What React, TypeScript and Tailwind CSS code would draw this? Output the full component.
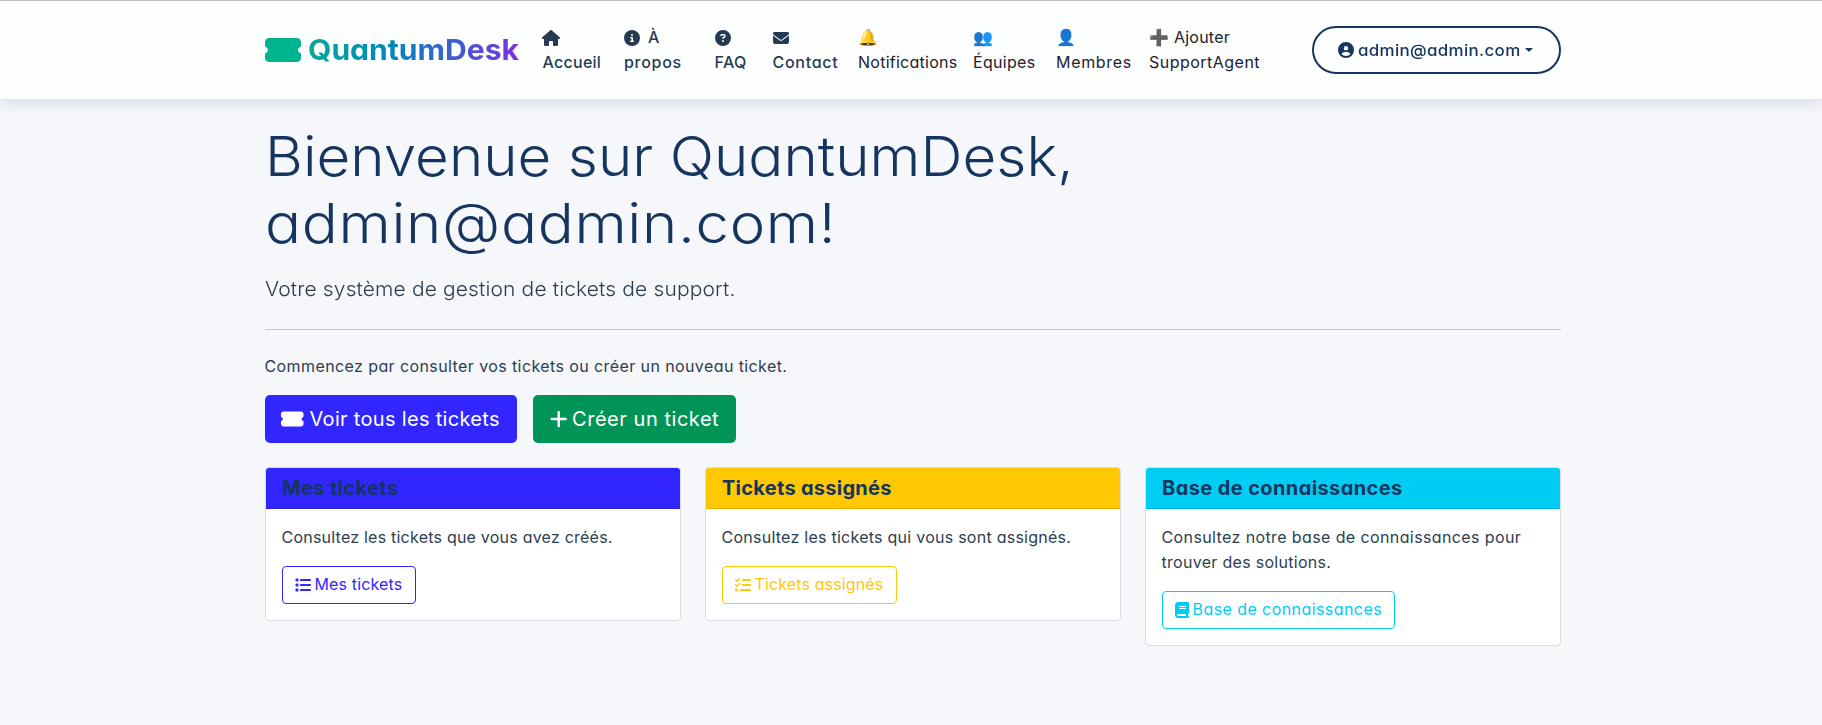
import type { ReactNode } from 'react'
import {
  FaBook,
  FaCircleInfo,
  FaCircleQuestion,
  FaCircleUser,
  FaEnvelope,
  FaHouse,
  FaList,
  FaListCheck,
  FaPlus,
  FaTicketSimple,
} from 'react-icons/fa6'

function NavItem({ width, icon, children }: { width: string; icon: ReactNode; children: ReactNode }) {
  return (
    <a href="#" className={`shrink-0 whitespace-nowrap leading-[25px] ${width}`}>
      <span className="flex h-[25px] items-center">{icon}</span>
      <span className="block">{children}</span>
    </a>
  )
}

function Emoji({ children }: { children: string }) {
  return <span className="font-['Noto_Color_Emoji'] text-base leading-none tracking-normal">{children}</span>
}

function Navbar() {
  return (
    <header className="h-[99px] border-t border-[#bfbfbf] bg-[#fdfefe] pl-[264.5px] shadow-[0_2px_16px_rgba(22,53,80,0.17)]">
      <div className="flex h-full w-[1296px] items-center">
        <a href="#" className="flex w-[277.5px] shrink-0 items-center">
          <FaTicketSimple className="h-8 w-9 text-[#00b48f]" />
          <span className="ml-[7.5px] origin-left scale-x-[1.045] bg-linear-[100deg,#06aa9a_0%,#0089b9_38%,#7f2fe6_100%] bg-clip-text text-[28.8px] leading-[46px] font-bold text-transparent">
            QuantumDesk
          </span>
        </a>
        <nav className="flex grow text-base">
          <div className="flex font-medium text-[#263b52]">
            <NavItem width="w-[82px]" icon={<FaHouse className="h-4 w-[18px]" />}>
              <span className="ml-[0.5px] tracking-[0.27px]">Accueil</span>
            </NavItem>
            <NavItem
              width="w-[90.5px]"
              icon={
                <>
                  <FaCircleInfo className="size-4" />
                  <span className="ml-[8px]">À</span>
                </>
              }
            >
              <span className="tracking-[0.7px]">propos</span>
            </NavItem>
            <NavItem width="w-[58px]" icon={<FaCircleQuestion className="size-4" />}>
              <span className="tracking-[0.44px]">FAQ</span>
            </NavItem>
            <NavItem width="w-[85.5px]" icon={<FaEnvelope className="size-4" />}>
              <span className="tracking-[0.73px]">Contact</span>
            </NavItem>
          </div>
          <div className="flex text-[#1c2230]">
            <NavItem width="w-[115px]" icon={<Emoji>🔔</Emoji>}>
              <span className="tracking-[0.26px]">Notifications</span>
            </NavItem>
            <NavItem width="w-[83px]" icon={<Emoji>👥</Emoji>}>
              <span className="tracking-[0.31px]">Équipes</span>
            </NavItem>
            <NavItem width="w-[93px]" icon={<Emoji>👤</Emoji>}>
              <span className="tracking-[0.68px]">Membres</span>
            </NavItem>
            <NavItem
              width="w-[120px]"
              icon={
                <>
                  <Emoji>➕</Emoji>
                  <span className="ml-[5px] tracking-[0.24px]">Ajouter</span>
                </>
              }
            >
              <span className="tracking-[0.48px]">SupportAgent</span>
            </NavItem>
          </div>
        </nav>
        <button className="flex h-12 w-[249px] shrink-0 items-center rounded-full border-2 border-[#15355f] pl-6 text-base font-medium text-[#15355f]">
          <FaCircleUser className="size-4" />
          <span className="ml-[4px] w-[167px] origin-left scale-x-[1.06] text-left tracking-[0.29px]">
            admin@admin.com
          </span>
          <span className="border-x-[4.8px] border-t-[4.8px] border-x-transparent border-t-[#15355f]" />
        </button>
      </div>
    </header>
  )
}

interface TopicCardProps {
  title: ReactNode
  header: string
  text: ReactNode
  button: string
  icon: ReactNode
  label: ReactNode
}

function TopicCard({ title, header, text, button, icon, label }: TopicCardProps) {
  return (
    <section className="w-[416px] overflow-hidden rounded-[4px] border border-[#dadde1] bg-white">
      <h5 className={`h-[41px] border-b px-4 text-xl leading-[40px] font-bold text-[#15355f] ${header}`}>{title}</h5>
      <div className="p-4 pl-[15.5px]">
        <p className="mb-4 leading-[25px] whitespace-nowrap">{text}</p>
        <a
          href="#"
          className={`flex h-[38px] items-center rounded-[4px] border pb-px pl-3 leading-[25px] whitespace-nowrap ${button}`}
        >
          {icon}
          {label}
        </a>
      </div>
    </section>
  )
}

export default function App() {
  return (
    <div className="min-h-[725px] bg-[#f5f7fb] font-['Inter',sans-serif] text-base text-[#2c3e50] [font-feature-settings:'cv11']">
      <Navbar />
      <main className="w-[1561px] pt-6 pl-[264.5px]">
        <h1 className="text-[55px] leading-[67px] font-light whitespace-nowrap text-[#15355f]">
          <span className="block origin-left scale-x-[1.06] tracking-[0.03px]">Bienvenue sur QuantumDesk,</span>
          <span className="block origin-left scale-x-[1.09] tracking-[0.6px]">admin@admin.com!</span>
        </h1>
        <p className="mt-[17px] origin-left scale-x-[1.05] text-xl leading-[31px] font-light tracking-[0.125px]">
          Votre système de gestion de tickets de support.
        </p>
        <hr className="mt-6 border-[#c3c6cb]" />
        <p className="mt-6 leading-[25px] tracking-[0.405px]">
          Commencez par consulter vos tickets ou créer un nouveau ticket.
        </p>
        <div className="mt-4 flex gap-4 text-xl whitespace-nowrap text-white">
          <a href="#" className="flex h-12 w-[252.5px] items-center rounded-[5px] bg-[#3126ff] pl-[16.5px]">
            <FaTicketSimple className="h-5 w-[22.5px]" />
            <span className="ml-[6px] tracking-[0.315px]">Voir tous les tickets</span>
          </a>
          <a href="#" className="flex h-12 w-[203px] items-center rounded-[5px] bg-[#009557] pl-[17px]">
            <FaPlus className="h-5 w-[17.5px]" />
            <span className="ml-[4.5px] tracking-[0.54px]">Créer un ticket</span>
          </a>
        </div>
        <div className="mt-6 flex items-start gap-6 pl-[0.5px]">
          <TopicCard
            title={<span className="tracking-[0.35px]">Mes tickets</span>}
            header="border-[#2b21e6] bg-[#3126ff]"
            text={<span className="tracking-[0.225px]">Consultez les tickets que vous avez créés.</span>}
            button="w-[134px] border-[#3126ff] text-[#3126ff]"
            icon={<FaList className="size-4" />}
            label={<span className="ml-[4px] tracking-[0.14px]">Mes tickets</span>}
          />
          <TopicCard
            title={<span className="tracking-[0.27px]">Tickets assignés</span>}
            header="border-[#e6b404] bg-[#ffc803]"
            text={<span className="tracking-[0.255px]">Consultez les tickets qui vous sont assignés.</span>}
            button="w-[175px] border-[#ffc803] text-[#ffc803]"
            icon={<FaListCheck className="size-4" />}
            label={<span className="ml-[4px] tracking-[0.13px]">Tickets assignés</span>}
          />
          <TopicCard
            title={<span className="tracking-[0.4px]">Base de connaissances</span>}
            header="border-[#08b6da] bg-[#00cdf4]"
            text={
              <>
                <span className="block tracking-[0.39px]">Consultez notre base de connaissances pour</span>
                <span className="block tracking-[0.295px]">trouver des solutions.</span>
              </>
            }
            button="w-[233px] border-[#00cdf4] text-[#00cdf4]"
            icon={<FaBook className="h-4 w-[14px]" />}
            label={<span className="ml-[4px] tracking-[0.43px]">Base de connaissances</span>}
          />
        </div>
      </main>
    </div>
  )
}
